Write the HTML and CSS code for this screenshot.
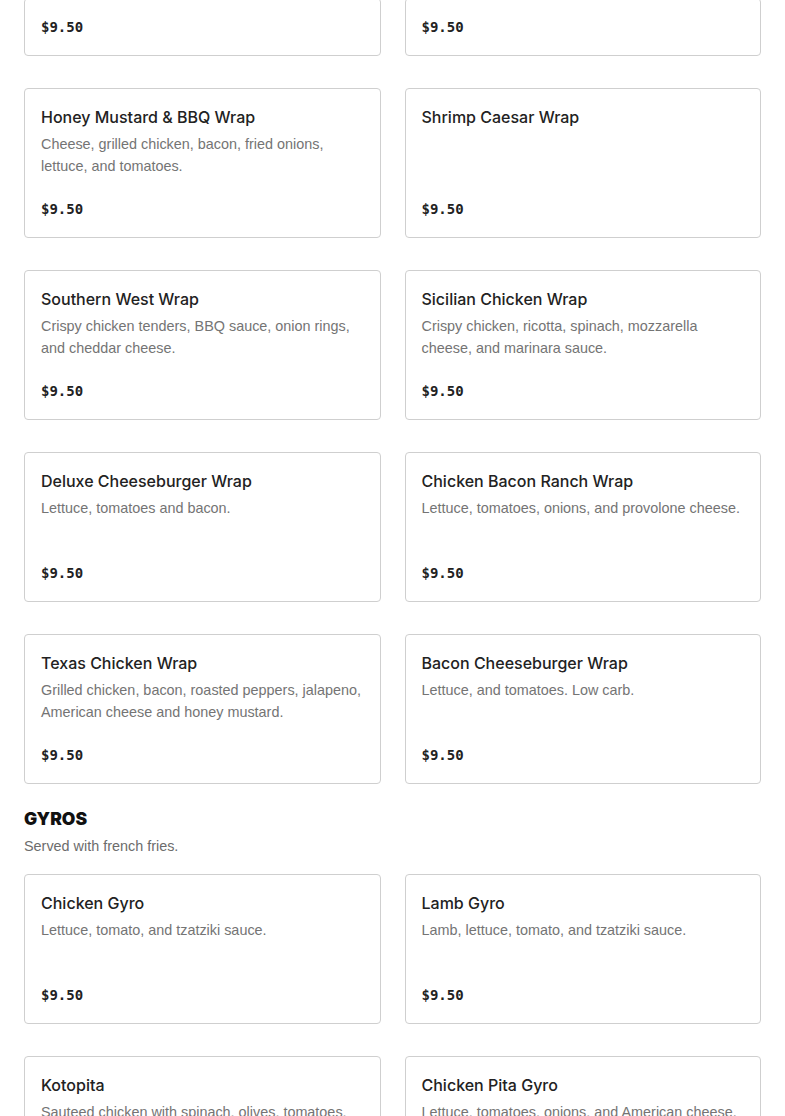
FILE: index.html
```html
<!DOCTYPE html>
<html>
<head>
<meta charset="utf-8">
<link rel="stylesheet" href="styles.css">
</head>
<body>
<div class="page">
  <div class="grid grid-top">
    <div class="card"><div class="price">$9.50</div></div>
    <div class="card"><div class="price">$9.50</div></div>
  </div>
  <div class="grid">
    <div class="card">
      <div class="title">Honey Mustard &amp; BBQ Wrap</div>
      <div class="desc">Cheese, grilled chicken, bacon, fried onions, lettuce, and tomatoes.</div>
      <div class="price">$9.50</div>
    </div>
    <div class="card">
      <div class="title">Shrimp Caesar Wrap</div>
      <div class="price">$9.50</div>
    </div>
    <div class="card">
      <div class="title">Southern West Wrap</div>
      <div class="desc">Crispy chicken tenders, BBQ sauce, onion rings, and cheddar cheese.</div>
      <div class="price">$9.50</div>
    </div>
    <div class="card">
      <div class="title">Sicilian Chicken Wrap</div>
      <div class="desc">Crispy chicken, ricotta, spinach, mozzarella cheese, and marinara sauce.</div>
      <div class="price">$9.50</div>
    </div>
    <div class="card">
      <div class="title">Deluxe Cheeseburger Wrap</div>
      <div class="desc">Lettuce, tomatoes and bacon.</div>
      <div class="price">$9.50</div>
    </div>
    <div class="card">
      <div class="title">Chicken Bacon Ranch Wrap</div>
      <div class="desc">Lettuce, tomatoes, onions, and provolone cheese.</div>
      <div class="price">$9.50</div>
    </div>
    <div class="card">
      <div class="title">Texas Chicken Wrap</div>
      <div class="desc">Grilled chicken, bacon, roasted peppers, jalapeno, American cheese and honey mustard.</div>
      <div class="price">$9.50</div>
    </div>
    <div class="card">
      <div class="title">Bacon Cheeseburger Wrap</div>
      <div class="desc">Lettuce, and tomatoes. Low carb.</div>
      <div class="price">$9.50</div>
    </div>
  </div>
  <section class="section">
    <h2 class="section-title">GYROS</h2>
    <p class="section-sub">Served with french fries.</p>
    <div class="grid">
      <div class="card">
        <div class="title">Chicken Gyro</div>
        <div class="desc">Lettuce, tomato, and tzatziki sauce.</div>
        <div class="price">$9.50</div>
      </div>
      <div class="card">
        <div class="title">Lamb Gyro</div>
        <div class="desc">Lamb, lettuce, tomato, and tzatziki sauce.</div>
        <div class="price">$9.50</div>
      </div>
      <div class="card">
        <div class="title">Kotopita</div>
        <div class="desc">Sauteed chicken with spinach, olives, tomatoes, and feta cheese.</div>
        <div class="price">$9.50</div>
      </div>
      <div class="card">
        <div class="title">Chicken Pita Gyro</div>
        <div class="desc">Lettuce, tomatoes, onions, and American cheese.</div>
        <div class="price">$9.50</div>
      </div>
    </div>
  </section>
</div>
</body>
</html>
```
FILE: styles.css
```css
html, body {
  margin: 0;
  padding: 0;
  background: #fff;
}
body {
  font-family: "Liberation Sans", Arial, sans-serif;
  color: #222;
  overflow: hidden;
}
.page {
  padding: 0 24px;
}
.grid {
  display: grid;
  grid-template-columns: 1fr 1fr;
  column-gap: 24px;
  row-gap: 32px;
}
.card {
  border: 1px solid #cfcfcf;
  border-radius: 4px;
  padding: 16px;
  min-height: 116px;
  display: flex;
  flex-direction: column;
  box-sizing: content-box;
}
.grid-top {
  margin-top: -2px;
  margin-bottom: 32px;
}
.grid-top .card {
  min-height: 0;
}
.title {
  font-family: Inter, "Liberation Sans", sans-serif;
  font-size: 16px;
  line-height: 24px;
  font-weight: 500;
  color: #222;
}
.desc {
  margin-top: 4px;
  font-size: 14.4px;
  line-height: 22px;
  color: #747474;
}
.price {
  margin-top: auto;
  padding-top: 1px;
  font-family: "DejaVu Sans Mono", "Liberation Mono", monospace;
  font-weight: bold;
  font-size: 14px;
  line-height: 23px;
  color: #222;
}
.section {
  margin-top: 23px;
}
.section-title {
  margin: 0;
  font-family: Inter, "Liberation Sans", sans-serif;
  font-weight: 900;
  font-size: 17.5px;
  line-height: 24px;
  color: #111;
}
.section-sub {
  margin: 4px 0 17px;
  font-size: 14.4px;
  line-height: 22px;
  color: #6c6c6c;
}
```
